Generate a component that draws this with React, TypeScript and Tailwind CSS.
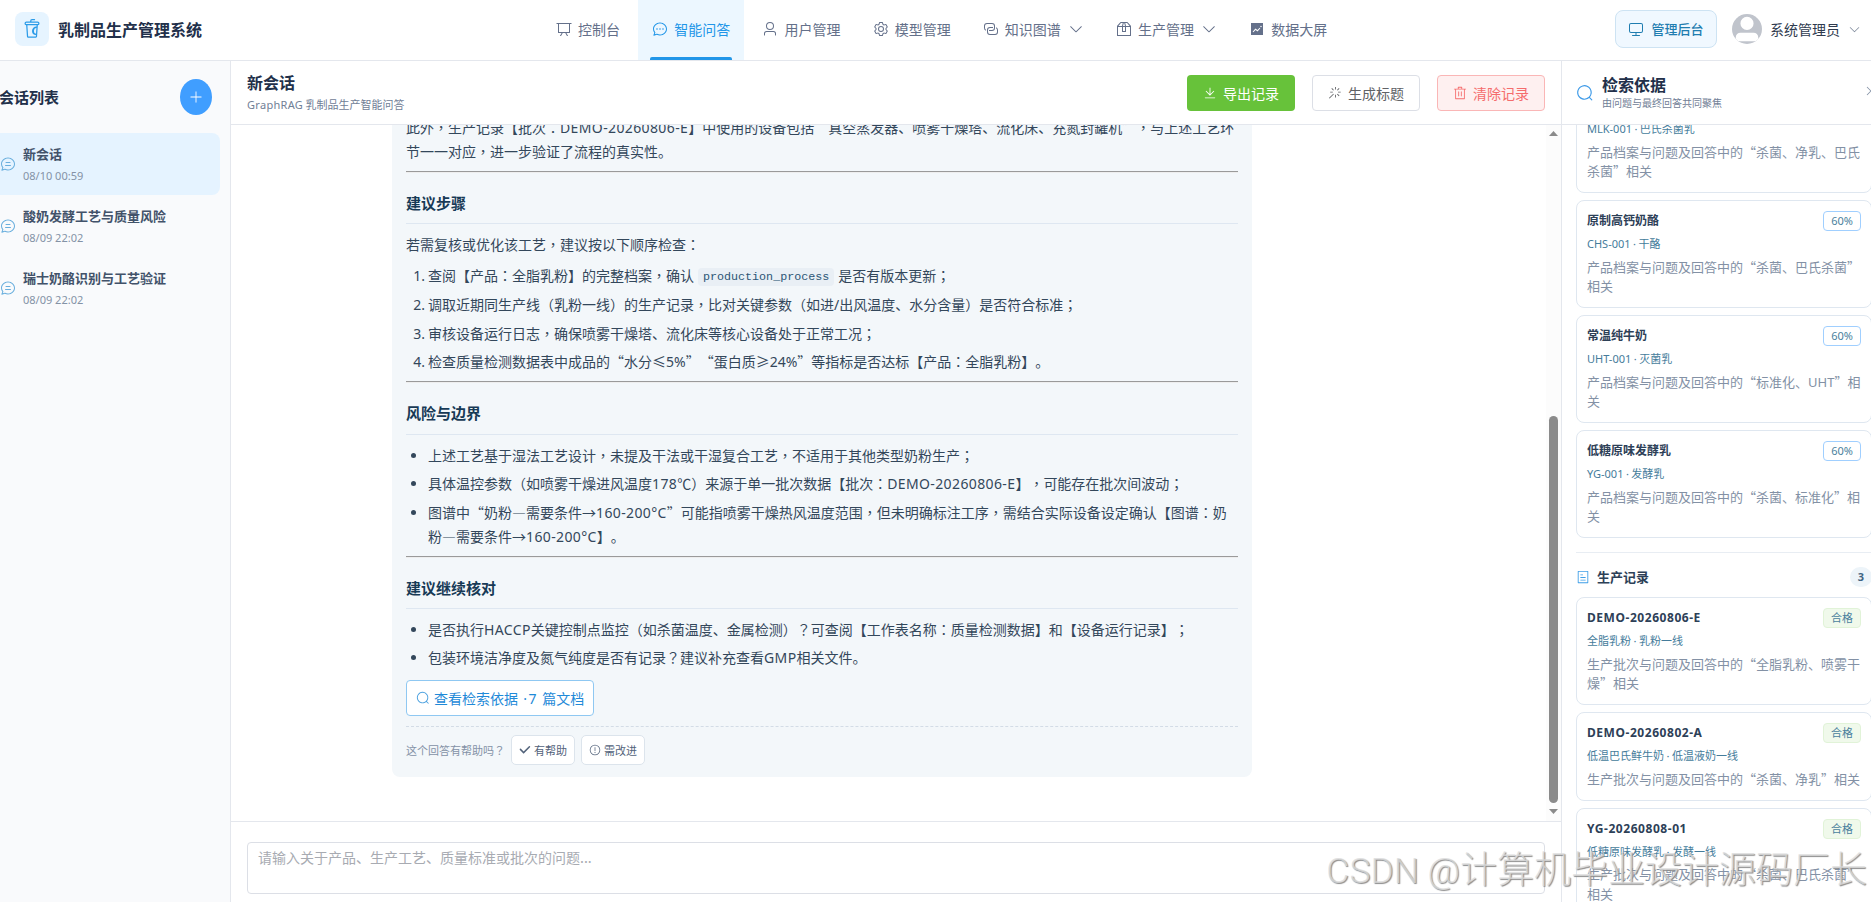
import type { ReactNode } from 'react';

const icons = {
  cup: 'M416 128V96a96 96 0 0 1 96-96h128a32 32 0 1 1 0 64H512a32 32 0 0 0-32 32v32h320a96 96 0 0 1 11.712 191.296l-39.68 581.056A64 64 0 0 1 708.224 960H315.776a64 64 0 0 1-63.872-59.648l-39.616-581.056A96 96 0 0 1 224 128zM276.48 320l39.296 576h392.448l4.8-70.784A224.064 224.064 0 0 1 512 608a224.064 224.064 0 0 1 231.168-223.616l4.352-64.384zM224 256h576a32 32 0 1 0 0-64H224a32 32 0 0 0 0 64m493.44 503.872 21.12-309.12a160 160 0 0 0-21.12 309.12',
  board:
    'M32 128h960v64H32zM192 192v512h640V192zm-64-64h768v608a32 32 0 0 1-32 32H160a32 32 0 0 1-32-32zM322.176 960H248.32l144.64-250.56 55.424 32zm453.888 0h-73.856L576 741.44l55.424-32z',
  chatDot:
    'm174.72 855.68 135.296-45.12 23.68 11.84C388.096 849.536 448.576 864 512 864c211.84 0 384-166.784 384-352S723.84 160 512 160 128 326.784 128 512c0 69.12 24.96 139.264 70.848 199.232l22.08 28.8-46.272 115.584zm-45.248 82.56A32 32 0 0 1 89.6 896l58.368-145.92C94.72 680.32 64 596.864 64 512 64 299.904 256 96 512 96s448 203.904 448 416-192 416-448 416a461.056 461.056 0 0 1-206.912-48.384l-175.616 58.56zM512 563.2a51.2 51.2 0 1 1 0-102.4 51.2 51.2 0 0 1 0 102.4m192 0a51.2 51.2 0 1 1 0-102.4 51.2 51.2 0 0 1 0 102.4m-384 0a51.2 51.2 0 1 1 0-102.4 51.2 51.2 0 0 1 0 102.4',
  chatLine:
    'm174.72 855.68 135.296-45.12 23.68 11.84C388.096 849.536 448.576 864 512 864c211.84 0 384-166.784 384-352S723.84 160 512 160 128 326.784 128 512c0 69.12 24.96 139.264 70.848 199.232l22.08 28.8-46.272 115.584zm-45.248 82.56A32 32 0 0 1 89.6 896l58.368-145.92C94.72 680.32 64 596.864 64 512 64 299.904 256 96 512 96s448 203.904 448 416-192 416-448 416a461.056 461.056 0 0 1-206.912-48.384l-175.616 58.56zM352 576h320q32 0 32 32t-32 32H352q-32 0-32-32t32-32m32-192h256q32 0 32 32t-32 32H384q-32 0-32-32t32-32',
  user: 'M512 512a192 192 0 1 0 0-384 192 192 0 0 0 0 384m0 64a256 256 0 1 1 0-512 256 256 0 0 1 0 512m320 320v-96a96 96 0 0 0-96-96H288a96 96 0 0 0-96 96v96a32 32 0 1 1-64 0v-96a160 160 0 0 1 160-160h448a160 160 0 0 1 160 160v96a32 32 0 1 1-64 0',
  userFilled:
    'M288 320a224 224 0 1 0 448 0 224 224 0 1 0-448 0m544 608H160a32 32 0 0 1-32-32v-96a160 160 0 0 1 160-160h448a160 160 0 0 1 160 160v96a32 32 0 0 1-32 32z',
  setting:
    'M600.704 64a32 32 0 0 1 30.464 22.208l35.2 109.376c14.784 7.232 28.928 15.36 42.432 24.512l112.384-24.192a32 32 0 0 1 34.432 15.36L944.32 364.8a32 32 0 0 1-4.032 37.504l-77.12 85.12a357 357 0 0 1 0 49.024l77.12 85.248a32 32 0 0 1 4.032 37.504l-88.704 153.6a32 32 0 0 1-34.432 15.296L708.8 803.904c-13.44 9.088-27.648 17.28-42.368 24.512l-35.264 109.376A32 32 0 0 1 600.704 960H423.296a32 32 0 0 1-30.464-22.208L357.696 828.48a352 352 0 0 1-42.56-24.64l-112.32 24.256a32 32 0 0 1-34.432-15.36L79.68 659.2a32 32 0 0 1 4.032-37.504l77.12-85.248a357 357 0 0 1 0-48.896l-77.12-85.248A32 32 0 0 1 79.68 364.8l88.704-153.6a32 32 0 0 1 34.432-15.296l112.32 24.256c13.568-9.152 27.776-17.408 42.56-24.64l35.2-109.312A32 32 0 0 1 423.232 64H600.64zm-23.424 64H446.72l-36.352 113.088-24.512 11.968a294 294 0 0 0-34.816 20.096l-22.656 15.36-116.224-25.088-65.28 113.152 79.68 88.192-1.92 27.136a293 293 0 0 0 0 40.192l1.92 27.136-79.808 88.192 65.344 113.152 116.224-25.024 22.656 15.296a294 294 0 0 0 34.816 20.096l24.512 11.968L446.72 896h130.688l36.48-113.152 24.448-11.904a288 288 0 0 0 34.752-20.096l22.592-15.296 116.288 25.024 65.28-113.152-79.744-88.192 1.92-27.136a293 293 0 0 0 0-40.256l-1.92-27.136 79.808-88.128-65.344-113.152-116.288 24.96-22.592-15.232a288 288 0 0 0-34.752-20.096l-24.448-11.904L577.344 128zM512 320a192 192 0 1 1 0 384 192 192 0 0 1 0-384m0 64a128 128 0 1 0 0 256 128 128 0 0 0 0-256',
  connection:
    'M640 384v64H448a128 128 0 0 0-128 128v128a128 128 0 0 0 128 128h320a128 128 0 0 0 128-128V576a128 128 0 0 0-64-110.848V394.88c74.56 26.368 128 97.472 128 181.056v128a192 192 0 0 1-192 192H448a192 192 0 0 1-192-192V576a192 192 0 0 1 192-192zM384 640v-64h192a128 128 0 0 0 128-128V320a128 128 0 0 0-128-128H256a128 128 0 0 0-128 128v128a128 128 0 0 0 64 110.848v70.272A192.064 192.064 0 0 1 64 448V320a192 192 0 0 1 192-192h320a192 192 0 0 1 192 192v128a192 192 0 0 1-192 192z',
  box: 'M317.056 128 128 344.064V896h768V344.064L706.944 128zm-14.528-64h418.944a32 32 0 0 1 24.064 10.88l206.528 236.096A32 32 0 0 1 960 332.032V928a32 32 0 0 1-32 32H96a32 32 0 0 1-32-32V332.032a32 32 0 0 1 7.936-21.12L278.4 75.008A32 32 0 0 1 302.528 64zM64 320h896v64H64zM448 327.872V640h128V327.872L526.08 128h-28.16zM448 64h128l64 256v352a32 32 0 0 1-32 32H416a32 32 0 0 1-32-32V320z',
  trend:
    'M128 896V128h768v768zm291.712-327.296 128 102.4 180.16-201.792-47.744-42.624-139.84 156.608-128-102.4-180.16 201.792 47.744 42.624 139.84-156.608zM816 352a48 48 0 1 0-96 0 48 48 0 0 0 96 0',
  down: 'M831.872 340.864 512 652.672 192.128 340.864a30.592 30.592 0 0 0-42.752 0 29.12 29.12 0 0 0 0 41.6L489.664 714.24a32 32 0 0 0 44.672 0l340.288-331.712a29.12 29.12 0 0 0 0-41.728 30.592 30.592 0 0 0-42.752 0z',
  monitor:
    'M544 768v128h192a32 32 0 1 1 0 64H288a32 32 0 1 1 0-64h192V768H192A128 128 0 0 1 64 640V256a128 128 0 0 1 128-128h640a128 128 0 0 1 128 128v384a128 128 0 0 1-128 128zM192 192a64 64 0 0 0-64 64v384a64 64 0 0 0 64 64h640a64 64 0 0 0 64-64V256a64 64 0 0 0-64-64z',
  plus: 'M480 480V128a32 32 0 0 1 64 0v352h352a32 32 0 1 1 0 64H544v352a32 32 0 1 1-64 0V544H128a32 32 0 0 1 0-64z',
  download:
    'M160 832h704a32 32 0 1 1 0 64H160a32 32 0 1 1 0-64m384-253.696 236.288-236.352 45.248 45.248L508.8 704 192 387.2l45.248-45.248L480 584.704V128h64z',
  magic:
    'M512 64h64v192h-64zm0 576h64v192h-64zM160 480v-64h192v64zm576 0v-64h192v64zM249.856 199.04l45.248-45.184L430.848 289.6 385.6 334.848 249.856 199.104zM657.152 606.4l45.248-45.248 135.744 135.744-45.248 45.248zM114.048 923.2 68.8 877.952l316.8-316.8 45.248 45.248zM702.4 334.848 657.152 289.6l135.744-135.744 45.248 45.248z',
  trash:
    'M160 256H96a32 32 0 0 1 0-64h256V95.936a32 32 0 0 1 32-32h256a32 32 0 0 1 32 32V192h256a32 32 0 1 1 0 64h-64v672a32 32 0 0 1-32 32H192a32 32 0 0 1-32-32zm448-64v-64H416v64zM224 896h576V256H224zm192-128a32 32 0 0 1-32-32V416a32 32 0 0 1 64 0v320a32 32 0 0 1-32 32m192 0a32 32 0 0 1-32-32V416a32 32 0 0 1 64 0v320a32 32 0 0 1-32 32',
  search:
    'm795.904 750.72 124.992 124.928a32 32 0 0 1-45.248 45.248L750.656 795.904a416 416 0 1 1 45.248-45.248zM480 832a352 352 0 1 0 0-704 352 352 0 0 0 0 704',
  check:
    'M77.248 415.04a64 64 0 0 1 90.496 0l226.304 226.304L846.528 188.8a64 64 0 1 1 90.56 90.496l-543.04 543.04-316.8-316.8a64 64 0 0 1 0-90.496z',
  warning:
    'M512 64a448 448 0 1 1 0 896 448 448 0 0 1 0-896m0 832a384 384 0 0 0 0-768 384 384 0 0 0 0 768m48-176a48 48 0 1 1-96 0 48 48 0 0 1 96 0m-48-464a32 32 0 0 1 32 32v288a32 32 0 0 1-64 0V288a32 32 0 0 1 32-32',
  tickets:
    'M192 128v768h640V128zm-32-64h704a32 32 0 0 1 32 32v832a32 32 0 0 1-32 32H160a32 32 0 0 1-32-32V96a32 32 0 0 1 32-32m160 448h384v64H320zm0-192h192v64H320zm0 384h384v64H320z',
  close:
    'M764.288 214.592 512 466.88 259.712 214.592a31.936 31.936 0 0 0-45.12 45.12L466.752 512 214.528 764.224a31.936 31.936 0 1 0 45.12 45.184L512 557.184l252.288 252.288a31.936 31.936 0 0 0 45.12-45.12L557.12 512.064l252.288-252.352a31.936 31.936 0 1 0-45.12-45.184z',
};

type IconName = keyof typeof icons;

function Icon({ name, className = 'size-4' }: { name: IconName; className?: string }) {
  return (
    <svg viewBox="0 0 1024 1024" fill="currentColor" className={`shrink-0 ${className}`}>
      <path d={icons[name]} />
    </svg>
  );
}

// Latin runs get Noto Sans, and ，：；？ sit in the middle of their cell
function Mixed({ text, spaced = false }: { text: string; spaced?: boolean }) {
  const parts = text.split(/([A-Za-z0-9%°≤≥·/.-]+|[，：；？]+)/);
  return (
    <>
      {parts.map((part, i) => {
        if (i % 2 === 0) return part;
        if (/[，：；？]/.test(part)) {
          return (
            <span key={i} lang="zh-TW" className="font-['Noto_Sans_CJK_TC',sans-serif] leading-[0]">
              {part}
            </span>
          );
        }
        return (
          <span
            key={i}
            className={`font-['Noto_Sans','Noto_Sans_CJK_SC',sans-serif] leading-[0] ${spaced ? 'tracking-[0.38px]' : ''}`}
          >
            {part}
          </span>
        );
      })}
    </>
  );
}

const navItems: { icon: IconName; label: string; active?: boolean; menu?: boolean }[] = [
  { icon: 'board', label: '控制台' },
  { icon: 'chatDot', label: '智能问答', active: true },
  { icon: 'user', label: '用户管理' },
  { icon: 'setting', label: '模型管理' },
  { icon: 'connection', label: '知识图谱', menu: true },
  { icon: 'box', label: '生产管理', menu: true },
  { icon: 'trend', label: '数据大屏' },
];

const sessions = [
  { title: '新会话', time: '08/10 00:59', active: true },
  { title: '酸奶发酵工艺与质量风险', time: '08/09 22:02' },
  { title: '瑞士奶酪识别与工艺验证', time: '08/09 22:02' },
];

const products = [
  { title: '巴氏杀菌鲜牛奶', tag: '60%', meta: 'MLK-001 · 巴氏杀菌乳', desc: '产品档案与问题及回答中的“杀菌、净乳、巴氏杀菌”相关' },
  { title: '原制高钙奶酪', tag: '60%', meta: 'CHS-001 · 干酪', desc: '产品档案与问题及回答中的“杀菌、巴氏杀菌”相关' },
  { title: '常温纯牛奶', tag: '60%', meta: 'UHT-001 · 灭菌乳', desc: '产品档案与问题及回答中的“标准化、UHT”相关' },
  { title: '低糖原味发酵乳', tag: '60%', meta: 'YG-001 · 发酵乳', desc: '产品档案与问题及回答中的“杀菌、标准化”相关' },
];

const batches = [
  { title: 'DEMO-20260806-E', tag: '合格', meta: '全脂乳粉 · 乳粉一线', desc: '生产批次与问题及回答中的“全脂乳粉、喷雾干燥”相关' },
  { title: 'DEMO-20260802-A', tag: '合格', meta: '低温巴氏鲜牛奶 · 低温液奶一线', desc: '生产批次与问题及回答中的“杀菌、净乳”相关' },
  { title: 'YG-20260808-01', tag: '合格', meta: '低糖原味发酵乳 · 发酵一线', desc: '生产批次与问题及回答中的“杀菌、巴氏杀菌”相关' },
];

function EvidenceCard({ item, ok }: { item: (typeof products)[number]; ok?: boolean }) {
  return (
    <div className="mb-[7px] w-[296px] shrink-0 rounded-lg border border-[#dfe7f0] bg-white p-[10px]">
      <div className="flex h-5 items-start justify-between">
        <span className={`text-xs leading-[17px] font-bold text-[#2d4057] ${ok ? 'tracking-[0.55px]' : ''}`}>
          <Mixed text={item.title} />
        </span>
        <span
          className={`h-5 w-[38px] rounded border text-center text-[11px] leading-[17px] text-[#4a7f9d] ${
            ok ? 'border-[#e1f3d8] bg-[#f0f9eb]' : 'border-[#a0cfff] bg-white'
          }`}
        >
          <Mixed text={item.tag} />
        </span>
      </div>
      <div className="mt-[4px] text-[11px] leading-4 text-[#457c9b]">
        <Mixed text={item.meta} />
      </div>
      <p className="mt-[5.5px] mb-[1.5px] text-[13px] leading-[19.5px] text-[#8391a5]">
        {/* the line may break after the closing quote */}
        <Mixed text={item.desc.replace('”', '”\u200b')} />
      </p>
    </div>
  );
}

function Heading({ children, className = 'h-[51px] pt-[18px]' }: { children: ReactNode; className?: string }) {
  return (
    <h3 className={`border-b border-[#dee7f1] text-[15px] leading-6 font-bold text-[#173a56] ${className}`}>
      {children}
    </h3>
  );
}

function Rule({ className }: { className: string }) {
  return <div className={`h-[2px] border-t border-[#9a9a9a] border-b-[#eeeeee] border-b ${className}`} />;
}

function Step({ n, children }: { n: number; children: ReactNode }) {
  return (
    <li className="flex h-6">
      <span className="w-[22px] shrink-0 pr-[3px] text-right">
        <Mixed text={`${n}.`} />
      </span>
      <span>{children}</span>
    </li>
  );
}

function Bullet({ text }: { text: string }) {
  return (
    <li className="flex">
      <span className="mt-[10px] mr-[12px] ml-[5px] size-[5px] shrink-0 rounded-full bg-[#33475b]" />
      <span>
        <Mixed text={text} spaced />
      </span>
    </li>
  );
}

function Scrollbar() {
  return (
    <div className="flex w-[15px] shrink-0 flex-col items-center bg-[#fcfcfc] pt-[6px] pb-[7px]">
      <svg viewBox="0 0 9 5" className="h-[5px] w-[9px] fill-[#8b8b8b]">
        <path d="M4.5 0 9 5H0z" />
      </svg>
      <div className="mt-[280px] w-[9px] flex-1 rounded-full bg-[#8b8b8b]" />
      <svg viewBox="0 0 9 5" className="mt-[6px] h-[5px] w-[9px] fill-[#8b8b8b]">
        <path d="M0 0h9L4.5 5z" />
      </svg>
    </div>
  );
}

export default function App() {
  return (
    <div
      lang="zh-CN"
      className="relative flex h-[902px] w-[1871px] flex-col overflow-hidden bg-white font-['Noto_Sans_CJK_SC',sans-serif] text-sm [text-spacing-trim:space-all]"
    >
      <header className="flex h-[61px] shrink-0 items-center border-b border-[#e4e7ed]">
        <div className="flex w-[542px] shrink-0 items-center pb-[2px] pl-[15px]">
          <div className="flex size-[34px] items-center justify-center rounded-lg bg-[#e6f4ff] text-[#2b9be8]">
            <Icon name="cup" className="size-5" />
          </div>
          <h1 className="ml-[9px] text-base leading-6 font-bold text-[#22304a]">乳制品生产管理系统</h1>
        </div>
        <nav className="flex h-full gap-1">
          {navItems.map((item) => (
            <div
              key={item.label}
              className={`relative flex h-full items-center gap-[6px] px-[14.1px] pb-[2px] ${
                item.active ? 'bg-[#ecf7ff] text-[#2196e8]' : 'text-[#64708a]'
              }`}
            >
              <Icon name={item.icon} />
              <span className="leading-5">{item.label}</span>
              {item.menu && <Icon name="down" className="ml-[1px] size-4" />}
              {item.active && (
                <span className="absolute inset-x-3 bottom-0 h-[3px] rounded-t-[2px] bg-[#2196e8]" />
              )}
            </div>
          ))}
        </nav>
        <div className="ml-auto flex items-center pr-[10px] pb-[2px]">
          <button className="flex h-[38px] w-[102px] items-center justify-center gap-[7px] rounded-lg border border-[#cde3f3] bg-[#f0f8ff] text-[13px] font-medium text-[#1f7db0]">
            <Icon name="monitor" />
            管理后台
          </button>
          <div className="ml-[15px] size-[30px] overflow-hidden rounded-full bg-[#c0c4cc] text-white">
            <Icon name="userFilled" className="size-[30px]" />
          </div>
          <span className="ml-[8px] leading-5 text-[#303b4f]">系统管理员</span>
          <Icon name="down" className="ml-[8px] size-[13px] text-[#7d889a]" />
        </div>
      </header>

      <div className="flex min-h-0 flex-1">
        <aside className="w-[231px] shrink-0 overflow-hidden border-r border-[#e4e7ed] bg-[#f9fafc]">
          <div className="-ml-[10px]">
            <div className="flex h-[72px] items-center justify-between pr-[18px] pl-[9px]">
              <h2 className="text-[15px] font-bold text-[#22304a]">会话列表</h2>
              <button className="flex h-9 w-8 items-center justify-center rounded-[50%] bg-[#409eff] text-white">
                <Icon name="plus" className="size-[14px]" />
              </button>
            </div>
            {sessions.map((s) => (
              <div
                key={s.title}
                className={`mr-[10px] flex h-[62px] items-center gap-[7px] rounded-lg pl-[10px] ${
                  s.active ? 'bg-[#e5f3ff]' : ''
                }`}
              >
                <Icon name="chatLine" className="size-4 text-[#69aedd]" />
                <div>
                  <div className="-mt-[1px] text-[13px] leading-5 font-bold text-[#42526a]">{s.title}</div>
                  <div className="mt-[4px] font-['Noto_Sans',sans-serif] text-[11px] leading-4 text-[#8492a6]">
                    {s.time}
                  </div>
                </div>
              </div>
            ))}
          </div>
        </aside>

        <main className="flex w-[1330px] shrink-0 flex-col">
          <div className="flex h-[64px] shrink-0 items-center justify-between border-b border-[#e4e7ed] px-[16px]">
            <div className="-mt-[2px]">
              <h2 className="text-base leading-6 font-bold text-[#22304a]">新会话</h2>
              <p className="text-[11px] leading-5 text-[#718096]">
                <span className="font-['Noto_Sans',sans-serif] leading-[0] tracking-[0.3px]">GraphRAG</span>{' '}
                乳制品生产智能问答
              </p>
            </div>
            <div className="flex gap-[17px]">
              <button className="flex h-9 w-[108px] items-center justify-center gap-[6px] rounded bg-[#67c23a] text-white">
                <Icon name="download" className="size-[14px]" />
                导出记录
              </button>
              <button className="flex h-9 w-[108px] items-center justify-center gap-[6px] rounded border border-[#dcdfe6] bg-white text-[#606266]">
                <Icon name="magic" className="size-[14px]" />
                生成标题
              </button>
              <button className="flex h-9 w-[108px] items-center justify-center gap-[6px] rounded border border-[#fab6b6] bg-[#fef0f0] text-[#f56c6c]">
                <Icon name="trash" className="size-[14px]" />
                清除记录
              </button>
            </div>
          </div>

          <div className="flex h-[696px] shrink-0 overflow-hidden">
            <div className="flex-1">
              <div className="-mt-[21px] ml-[161px] h-[673px] w-[860px] rounded-lg bg-[#f3f7fa] px-[14px] pt-[11px] leading-6 text-[#33475b]">
                <p>
                  <Mixed
                    text="此外，生产记录【批次：DEMO-20260806-E】中使用的设备包括“真空蒸发器、喷雾干燥塔、流化床、充氮封罐机”，与上述工艺环节一一对应，进一步验证了流程的真实性。"
                    spaced
                  />
                </p>
                <Rule className="mt-[8px]" />
                <Heading>建议步骤</Heading>
                <p className="mt-[8px]">
                  <Mixed text="若需复核或优化该工艺，建议按以下顺序检查：" />
                </p>
                <ol className="mt-[7px] flex flex-col gap-[4.8px]">
                  <Step n={1}>
                    <Mixed text="查阅【产品：全脂乳粉】的完整档案，确认" />
                    <code className="mx-1 inline-block h-[18px] rounded bg-[#e9eff5] px-[5px] align-middle font-['Liberation_Mono',monospace] text-[11.7px] leading-[18px] text-[#2c5676]">
                      production_process
                    </code>
                    <Mixed text="是否有版本更新；" />
                  </Step>
                  <Step n={2}>
                    <Mixed text="调取近期同生产线（乳粉一线）的生产记录，比对关键参数（如进/出风温度、水分含量）是否符合标准；" />
                  </Step>
                  <Step n={3}>
                    <Mixed text="审核设备运行日志，确保喷雾干燥塔、流化床等核心设备处于正常工况；" />
                  </Step>
                  <Step n={4}>
                    <Mixed text="检查质量检测数据表中成品的“水分≤5%”“蛋白质≥24%”等指标是否达标【产品：全脂乳粉】。" />
                  </Step>
                </ol>
                <Rule className="mt-[7.6px]" />
                <Heading className="h-[52px] pt-[18px]">风险与边界</Heading>
                <ul className="mt-[8px] flex flex-col gap-[4.5px]">
                  <Bullet text="上述工艺基于湿法工艺设计，未提及干法或干湿复合工艺，不适用于其他类型奶粉生产；" />
                  <Bullet text="具体温控参数（如喷雾干燥进风温度178℃）来源于单一批次数据【批次：DEMO-20260806-E】，可能存在批次间波动；" />
                  <Bullet text="图谱中“奶粉—需要条件→160-200°C”可能指喷雾干燥热风温度范围，但未明确标注工序，需结合实际设备设定确认【图谱：奶粉—需要条件→160-200°C】。" />
                </ul>
                <Rule className="mt-[8px]" />
                <Heading>建议继续核对</Heading>
                <ul className="mt-[8px] flex flex-col gap-[4.5px]">
                  <Bullet text="是否执行HACCP关键控制点监控（如杀菌温度、金属检测）？可查阅【工作表名称：质量检测数据】和【设备运行记录】；" />
                  <Bullet text="包装环境洁净度及氮气纯度是否有记录？建议补充查看GMP相关文件。" />
                </ul>
                <button className="mt-[11px] flex h-9 w-[188px] items-center gap-[4px] rounded-[4px] border border-[#8fc8f2] bg-white pl-[9px] whitespace-nowrap text-[#1f8ad8]">
                  <Icon name="search" className="size-[14px] opacity-80" />
                  <span>
                    查看检索依据{' '}
                    <span className="mr-[1px] ml-[2px] tracking-[1.6px]">
                      <Mixed text="·7" />
                    </span>{' '}
                    篇文档
                  </span>
                </button>
                <div className="mt-[10px] flex items-center border-t border-dashed border-[#d3dce6] pt-[8px] text-[11px]">
                  <span className="text-[#8492a6]">
                    <Mixed text="这个回答有帮助吗？" />
                  </span>
                  <button className="ml-[6px] flex h-[30px] w-16 items-center justify-center gap-[3px] rounded-[5px] border border-[#dce4ec] bg-white text-[#52627a]">
                    <Icon name="check" className="size-3" />
                    有帮助
                  </button>
                  <button className="ml-[6px] flex h-[30px] w-16 items-center justify-center gap-[3px] rounded-[5px] border border-[#dce4ec] bg-white text-[#52627a]">
                    <Icon name="warning" className="size-3" />
                    需改进
                  </button>
                </div>
              </div>
            </div>
            <Scrollbar />
          </div>

          <div className="flex-1 border-t border-[#e4e7ed] px-[16px] pt-5">
            <div className="h-[52px] rounded border border-[#dcdfe6] px-[10px] pt-[4px] leading-[21px] text-[#a8abb2]">
              请输入关于产品、生产工艺、质量标准或批次的问题...
            </div>
          </div>
        </main>

        <aside className="flex w-[310px] shrink-0 flex-col overflow-hidden border-l border-[#e4e7ed]">
          <div className="flex h-[64px] shrink-0 items-center border-b border-[#e4e7ed] pl-[14px]">
            <Icon name="search" className="size-[18px] text-[#3f9be8]" />
            <div className="ml-[8px] w-[262px] shrink-0">
              <h2 className="-mt-[1px] text-base leading-[22px] font-bold text-[#22304a]">检索依据</h2>
              <p className="text-[10px] leading-4 text-[#718096]">由问题与最终回答共同聚焦</p>
            </div>
            <Icon name="close" className="mb-1 size-[14px] text-[#8492a6]" />
          </div>
          <div className="flex-1 overflow-hidden pl-[14px]">
            <div className="-mt-[40px] flex w-[296px] flex-col">
              {products.map((item) => (
                <EvidenceCard key={item.title} item={item} />
              ))}
              <div className="mt-[7px] flex h-[45px] items-center border-t border-[#e8edf3] pt-[4px]">
                <Icon name="tickets" className="size-[14px] text-[#3f9fe8]" />
                <span className="ml-[7px] text-[13px] font-bold text-[#2d4057]">生产记录</span>
                <span className="ml-auto flex h-5 w-[22px] items-center justify-center rounded-full bg-[#edf4f9] font-['Noto_Sans',sans-serif] text-[11px] font-bold text-[#3f6482]">
                  3
                </span>
              </div>
              {batches.map((item) => (
                <EvidenceCard key={item.title} item={item} ok />
              ))}
            </div>
          </div>
        </aside>
      </div>

      <div className="pointer-events-none absolute right-[4px] bottom-[9px] text-[37px] leading-[52px] font-light whitespace-nowrap text-[#dcdcdc]/80 [text-shadow:1px_1px_1px_#8c8c8c]">
        <span className="font-['Roboto',sans-serif] text-[35.5px] leading-[0]">CSDN @</span>计算机毕业设计源码厂长
      </div>
    </div>
  );
}
